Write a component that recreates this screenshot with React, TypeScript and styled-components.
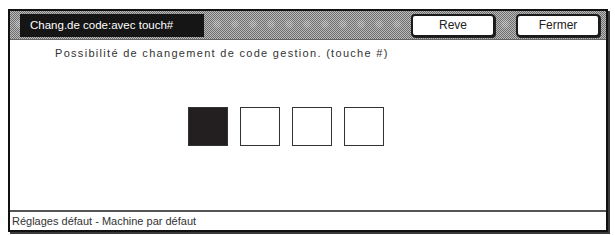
import React from "react"
import styled, { createGlobalStyle } from "styled-components"

const GlobalStyle = createGlobalStyle`
  html, body {
    margin: 0;
    padding: 0;
    background: #ffffff;
  }
  body {
    font-family: "Liberation Sans", Arial, sans-serif;
  }
`

const digits = [true, false, false, false]

export default function App() {
  return (
    <>
      <GlobalStyle />
      <S.Page>
        <S.Screen>
          <S.TitleBar>
            <S.TitleBox>Chang.de code:avec touch#</S.TitleBox>
            <S.Spacer />
            <S.Button>Reve</S.Button>
            <S.Button>Fermer</S.Button>
          </S.TitleBar>
          <S.Content>
            <S.Message>Possibilité de changement de code gestion. (touche #)</S.Message>
            <S.CodeRow>
              {digits.map((filled, i) => (
                <S.CodeBox key={i} filled={filled} />
              ))}
            </S.CodeRow>
          </S.Content>
          <S.StatusBar>Réglages défaut - Machine par défaut</S.StatusBar>
        </S.Screen>
      </S.Page>
    </>
  )
}

const dither = `
  background-color: #949494;
  background-image:
    radial-gradient(circle at 50% 50%, rgba(255, 255, 255, 0.16) 0 3px, transparent 5px),
    repeating-conic-gradient(#6c6c6c 0 25%, #bcbcbc 0 50%);
  background-size: 18px 26px, 2px 2px;
`

const S = {
  Page: styled.div`
    width: 615px;
    height: 235px;
    padding: 9px 0 0 8px;
    box-sizing: border-box;
  `,
  Screen: styled.div`
    width: 600px;
    height: 223px;
    box-sizing: border-box;
    border: 2px solid #111;
    box-shadow: 2px 2px 0 #3a3a3a;
    display: flex;
    flex-direction: column;
    background: #fff;
  `,
  TitleBar: styled.div`
    ${dither}
    height: 28px;
    display: flex;
    align-items: center;
    padding: 0 6px 0 10px;
    border-bottom: 1px solid #666;
    flex-shrink: 0;
  `,
  TitleBox: styled.div`
    width: 174px;
    height: 23px;
    background: #151515;
    color: #fff;
    font-size: 11.5px;
    line-height: 23px;
    padding-left: 10px;
  `,
  Spacer: styled.div`
    flex: 1;
  `,
  Button: styled.div`
    width: 80px;
    height: 19px;
    margin-left: 21px;
    background: #fff;
    border: 2px solid #1a1a1a;
    border-radius: 4px;
    box-shadow: 1px 1px 0 #222;
    color: #222;
    font-size: 12px;
    line-height: 19px;
    text-align: center;
  `,
  Content: styled.div`
    flex: 1;
    display: flex;
    flex-direction: column;
    padding: 6px 0 0 45px;
  `,
  Message: styled.div`
    font-size: 11px;
    color: #333;
    letter-spacing: 1.3px;
    line-height: 14px;
  `,
  CodeRow: styled.div`
    display: flex;
    gap: 12px;
    margin: 47px 0 0 133px;
  `,
  CodeBox: styled.div<{ filled: boolean }>`
    width: 40px;
    height: 39px;
    box-sizing: border-box;
    border: 1.5px solid #333;
    background: ${({ filled }) => (filled ? "#231f20" : "#fff")};
  `,
  StatusBar: styled.div`
    height: 18px;
    border-top: 2px solid #555;
    padding-left: 2px;
    font-size: 11px;
    line-height: 18px;
    color: #333;
    flex-shrink: 0;
  `,
}
